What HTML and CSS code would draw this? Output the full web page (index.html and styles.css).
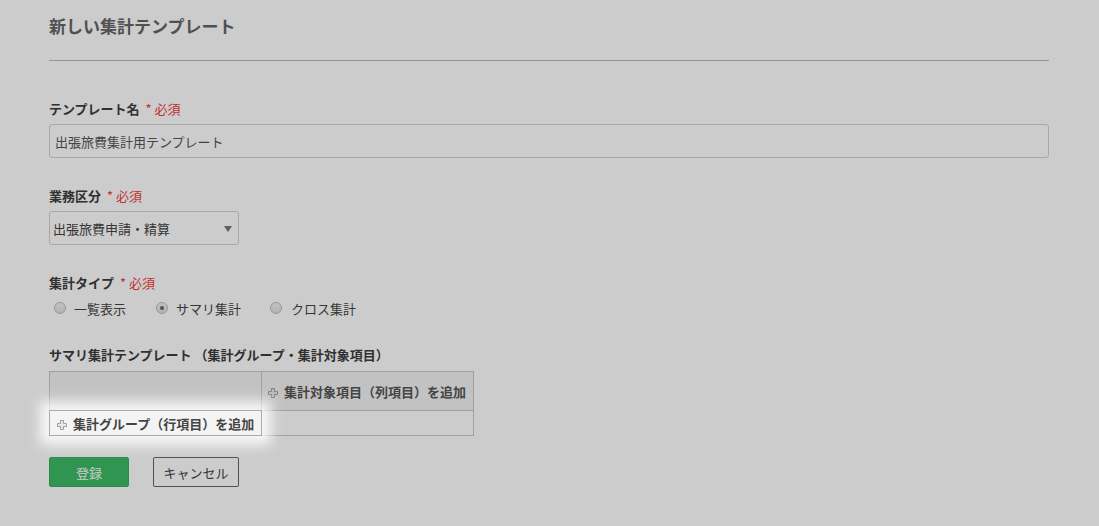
FILE: index.html
```html
<!DOCTYPE html>
<html lang="ja">
<head>
    <meta charset="UTF-8">
    <meta name="viewport" content="width=device-width, initial-scale=1.0">
    <title>新しい集計テンプレート</title>
    <link rel="stylesheet" href="styles.css">
</head>
<body>
    <div class="page">
        <header class="page-header">
            <h1>新しい集計テンプレート</h1>
        </header>

        <form class="form">
            <div class="form-group">
                <label class="form-label" for="template-name">テンプレート名 <span class="required">* 必須</span></label>
                <input class="text-input" id="template-name" type="text" value="出張旅費集計用テンプレート">
            </div>

            <div class="form-group">
                <label class="form-label" for="category">業務区分 <span class="required">* 必須</span></label>
                <div class="select-wrap">
                    <select class="select" id="category">
                        <option>出張旅費申請・精算</option>
                    </select>
                </div>
            </div>

            <div class="form-group">
                <div class="form-label">集計タイプ <span class="required">* 必須</span></div>
                <div class="radio-row">
                    <label class="radio"><input type="radio" name="type"> 一覧表示</label>
                    <label class="radio"><input type="radio" name="type" checked> サマリ集計</label>
                    <label class="radio"><input type="radio" name="type"> クロス集計</label>
                </div>
            </div>

            <div class="form-group">
                <div class="form-label">サマリ集計テンプレート （集計グループ・集計対象項目）</div>
                <table class="summary-table">
                    <colgroup>
                        <col class="col-group">
                        <col class="col-item">
                    </colgroup>
                    <tr class="head-row">
                        <th class="corner"></th>
                        <th class="add-col">
                            <svg class="plus" viewBox="0 0 10 10"><path d="M3.5 0.5h3v3h3v3h-3v3h-3v-3h-3v-3h3z"/></svg>
                            集計対象項目（列項目）を追加
                        </th>
                    </tr>
                    <tr>
                        <td class="add-row spotlight">
                            <svg class="plus" viewBox="0 0 10 10"><path d="M3.5 0.5h3v3h3v3h-3v3h-3v-3h-3v-3h3z"/></svg>
                            集計グループ（行項目）を追加
                        </td>
                        <td></td>
                    </tr>
                </table>
            </div>

            <div class="actions">
                <button type="button" class="btn btn-primary">登録</button>
                <button type="button" class="btn btn-cancel">キャンセル</button>
            </div>
        </form>
    </div>

    <!-- ガイド表示用のオーバーレイ -->
    <div class="overlay"></div>
</body>
</html>
```

FILE: styles.css
```css
body {
    margin: 0;
    padding: 0;
    background-color: #fff;
    color: #444;
    font-family: "Noto Sans CJK JP", "Noto Sans", sans-serif;
    font-size: 13px;
}
.page {
    width: 1000px;
    margin: 0 0 0 49px;
}
.page-header {
    padding-top: 16px;
    padding-bottom: 24px;
    border-bottom: 1px solid #bbb;
}
.page-header h1 {
    margin: 0;
    font-size: 17px;
    line-height: 20px;
    font-weight: bold;
    color: #666;
}
.form {
    padding-top: 39px;
}
.form-group {
    margin-bottom: 29px;
}
.form-label {
    display: block;
    font-weight: bold;
    line-height: 18px;
    margin-bottom: 6px;
    color: #3c3c3c;
}
.required {
    margin-left: 3px;
    color: #f03c3c;
    font-weight: normal;
}
.text-input {
    box-sizing: border-box;
    width: 100%;
    height: 34px;
    padding: 0 5px;
    border: 1px solid #d2d2d2;
    border-radius: 3px;
    font-family: inherit;
    font-size: 13px;
    color: #555;
    background: #fff;
}
.select-wrap {
    position: relative;
    width: 190px;
}
.select-wrap::after {
    content: "";
    position: absolute;
    right: 7px;
    top: 15px;
    border-left: 4px solid transparent;
    border-right: 4px solid transparent;
    border-top: 6px solid #777;
}
.select {
    appearance: none;
    -webkit-appearance: none;
    box-sizing: border-box;
    width: 190px;
    height: 34px;
    padding: 0 3px;
    border: 1px solid #d2d2d2;
    border-radius: 3px;
    background: #fff;
    font-family: inherit;
    font-size: 13px;
    color: #444;
}
.radio-row {
    display: flex;
    align-items: center;
    height: 18px;
    margin-top: 7px;
    padding-left: 5px;
}
.radio {
    display: flex;
    align-items: center;
    margin-right: 30px;
    color: #444;
}
.radio input {
    appearance: none;
    -webkit-appearance: none;
    width: 12px;
    height: 12px;
    margin: 0 8px 0 0;
    border: 1px solid #bdbdbd;
    border-radius: 50%;
    background: linear-gradient(#f4f4f4, #dedede);
    position: relative;
}
.radio input:checked::after {
    content: "";
    position: absolute;
    left: 3px;
    top: 3px;
    width: 4px;
    height: 4px;
    border-radius: 50%;
    background: #666;
}
.radio:nth-child(2) {
    margin-right: 29px;
}
.radio:nth-child(3) input {
    margin-right: 9px;
}
.summary-table {
    border-collapse: collapse;
    table-layout: fixed;
    width: 425px;
    margin-top: 7px;
}
.col-group,
.col-item {
    width: 212px;
}
.summary-table th,
.summary-table td {
    border: 1px solid #c8c8c8;
    padding: 0;
    text-align: left;
    font-weight: bold;
    color: #444;
    white-space: nowrap;
}
.head-row th {
    height: 38px;
    background: #f3f3f3;
}
.summary-table td {
    height: 24px;
}
.add-col {
    padding-left: 6px !important;
    color: #555 !important;
}
.add-row {
    padding-left: 7px !important;
}
.plus {
    width: 10px;
    height: 10px;
    vertical-align: -1px;
    margin-right: 3px;
}
.plus path {
    fill: #e8e8e8;
    stroke: #a0a0a0;
    stroke-width: 1;
    stroke-linejoin: round;
}
.actions {
    display: flex;
    gap: 24px;
    margin-top: -8px;
}
.btn {
    height: 30px;
    font-family: inherit;
    font-size: 13px;
    border-radius: 2px;
    cursor: pointer;
}
.btn-primary {
    width: 80px;
    background-color: #3cbb64;
    border: 1px solid #38b05e;
    color: #fff;
}
.btn-cancel {
    width: 86px;
    background-color: #fff;
    border: 1px solid #666;
    color: #444;
}
.overlay {
    position: fixed;
    inset: 0;
    background: rgba(0, 0, 0, 0.2);
    z-index: 100;
}
.spotlight {
    position: relative;
    z-index: 101;
    background: #f4f4f4;
}
/* 強調セルの周りのぼかし */
.spotlight::before {
    content: "";
    position: absolute;
    inset: -1px;
    z-index: -1;
    border: 1px solid #aaa;
    background: #f4f4f4;
    box-shadow: 0 0 12px 9px rgba(255, 255, 255, 0.85);
}
```
